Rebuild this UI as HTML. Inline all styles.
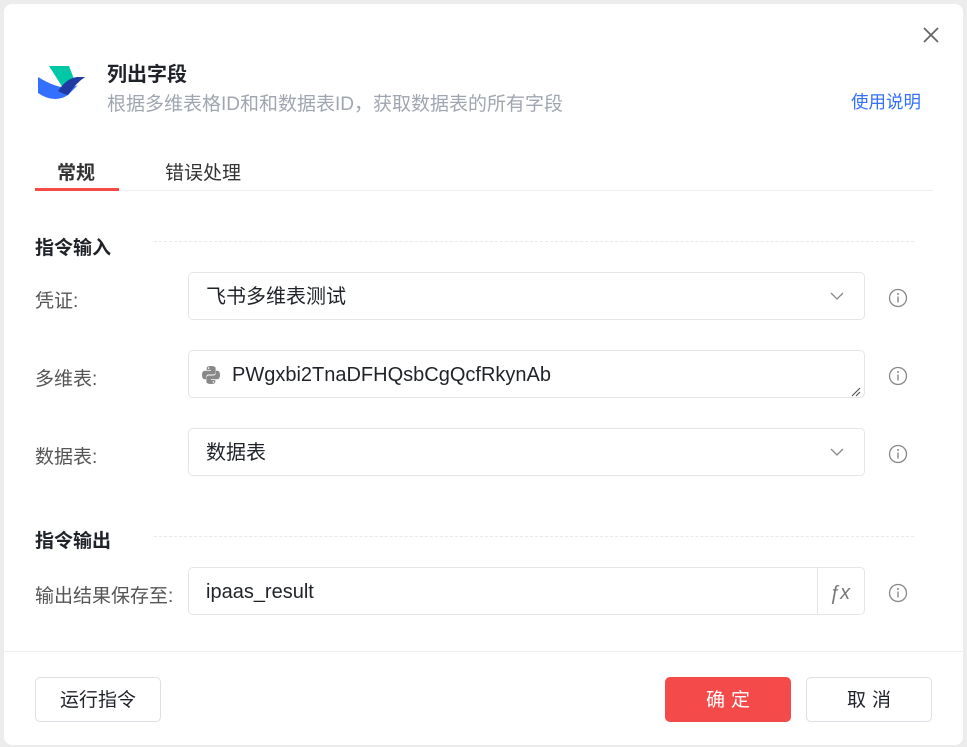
<!DOCTYPE html>
<html><head><meta charset="utf-8"><style>
*{box-sizing:border-box;margin:0;padding:0}
body{width:967px;height:747px;background:#ececec;font-family:"Liberation Sans","Noto Sans CJK SC",sans-serif;position:relative;overflow:hidden}
.modal{position:absolute;left:4px;top:4px;width:959px;height:741px;background:#fff;border-radius:8px}
.abs{position:absolute}
.title{left:103px;top:54px;font-size:20px;font-weight:bold;color:#1f2329}
.sub{left:103px;top:85px;font-size:19px;color:#a0a6b1}
.help{left:847px;top:85px;font-size:17.5px;color:#3370ff}
.tab{top:154px;font-size:19px;color:#333}
.tabline{left:31px;top:184px;width:84px;height:3px;background:#f54a45}
.tabborder{left:31px;top:186px;width:898px;height:1px;background:#eee}
.sec{left:31px;font-size:19px;font-weight:bold;color:#1f2329}
.dash{height:0;border-top:1px dashed #e6e8eb}
.lab{left:31px;font-size:19px;color:#555}
.inp{left:184px;width:677px;height:48px;border:1px solid #e3e5e8;border-radius:5px;font-size:20px;color:#1f2329;padding-left:17px;line-height:49px}
.info{left:884px;width:20px;height:20px}
.btn{border:1px solid #dcdfe3;border-radius:5px;height:45px;font-size:19px;text-align:center;line-height:45px;color:#1f2329;background:#fff}
</style></head><body>
<div class="modal">
<svg class="abs" style="left:918px;top:22px" width="18" height="18" viewBox="0 0 18 18"><path d="M2 2L16 16M16 2L2 16" stroke="#666" stroke-width="1.8"/></svg>
<svg class="abs" style="left:34px;top:58px" width="48" height="42" viewBox="0 0 48 42">
<path d="M11 4 L31 4 L36 17 L25 26 Z" fill="#00c8a6"/>
<path d="M0 15 L0 31 Q16 42 30 33 L40 23 Q26 31 0 15Z" fill="#3370ff"/>
<path d="M20 29 Q29 16 39 15 L47 15 Q38 21 30 33 Q25 32 20 29Z" fill="#1f3aa3"/>
</svg>
<div class="abs title">列出字段</div>
<div class="abs sub">根据多维表格ID和和数据表ID，获取数据表的所有字段</div>
<div class="abs help">使用说明</div>
<div class="abs tab" style="left:53px;font-weight:bold">常规</div>
<div class="abs tab" style="left:161px">错误处理</div>
<div class="abs tabborder"></div>
<div class="abs tabline"></div>

<div class="abs sec" style="top:229px">指令输入</div>
<div class="abs dash" style="left:150px;top:237px;width:760px"></div>

<div class="abs lab" style="top:282px">凭证:</div>
<div class="abs inp" style="top:268px">飞书多维表测试</div>
<svg class="abs" style="left:826px;top:288px" width="14" height="9" viewBox="0 0 14 9"><path d="M1 1L7 7L13 1" stroke="#888" fill="none" stroke-width="1.3"/></svg>

<div class="abs lab" style="top:360px">多维表:</div>
<div class="abs inp" style="top:346px;padding-left:43px">PWgxbi2TnaDFHQsbCgQcfRkynAb</div>
<svg class="abs" style="left:197px;top:361px" width="20" height="20" viewBox="0 0 20 20"><path d="M9.8 1C5.5 1 5.700 2.9 5.7 2.9V5h4.3v.8H4C4 5.8 1 5.5 1 10s2.6 4.3 2.6 4.3h1.6v-2.2s-.1-2.6 2.6-2.6h4.3s2.5 0 2.5-2.4V3.2S15 1 9.8 1zM7.6 2.3a.8.8 0 110 1.6.8.8 0 010-1.6z" fill="#888"/><path d="M10.2 19c4.3 0 4.1-1.9 4.1-1.9V15H10v-.8h6s3 .3 3-4.2-2.6-4.3-2.6-4.3h-1.6v2.2s.1 2.6-2.6 2.6H7.9s-2.5 0-2.5 2.4v3.9S5 19 10.2 19zm2.2-1.3a.8.8 0 110-1.6.8.8 0 010 1.6z" fill="#888"/></svg>
<svg class="abs" style="left:845px;top:381px" width="12" height="12" viewBox="0 0 12 12"><path d="M11 3L3 11M11 7L7 11" stroke="#555" stroke-width="1.2"/></svg>

<div class="abs lab" style="top:438px">数据表:</div>
<div class="abs inp" style="top:424px">数据表</div>
<svg class="abs" style="left:826px;top:444px" width="14" height="9" viewBox="0 0 14 9"><path d="M1 1L7 7L13 1" stroke="#888" fill="none" stroke-width="1.3"/></svg>

<div class="abs sec" style="top:522px">指令输出</div>
<div class="abs dash" style="left:150px;top:532px;width:760px"></div>

<div class="abs lab" style="top:577px">输出结果保存至:</div>
<div class="abs inp" style="top:563px">ipaas_result</div>
<div class="abs" style="left:813px;top:564px;width:1px;height:46px;background:#e3e5e8"></div>
<div class="abs" style="left:825px;top:578px;font-size:20px;font-style:italic;color:#777">ƒx</div>

<svg class="abs info" style="top:284px" viewBox="0 0 20 20"><circle cx="10" cy="10" r="8.5" stroke="#888" fill="none" stroke-width="1.3"/><circle cx="10" cy="6" r="1" fill="#888"/><path d="M10 8.5v6" stroke="#888" stroke-width="1.4"/></svg>
<svg class="abs info" style="top:362px" viewBox="0 0 20 20"><circle cx="10" cy="10" r="8.5" stroke="#888" fill="none" stroke-width="1.3"/><circle cx="10" cy="6" r="1" fill="#888"/><path d="M10 8.5v6" stroke="#888" stroke-width="1.4"/></svg>
<svg class="abs info" style="top:440px" viewBox="0 0 20 20"><circle cx="10" cy="10" r="8.5" stroke="#888" fill="none" stroke-width="1.3"/><circle cx="10" cy="6" r="1" fill="#888"/><path d="M10 8.5v6" stroke="#888" stroke-width="1.4"/></svg>
<svg class="abs info" style="top:579px" viewBox="0 0 20 20"><circle cx="10" cy="10" r="8.5" stroke="#888" fill="none" stroke-width="1.3"/><circle cx="10" cy="6" r="1" fill="#888"/><path d="M10 8.5v6" stroke="#888" stroke-width="1.4"/></svg>

<div class="abs" style="left:0;top:647px;width:959px;height:1px;background:#eee"></div>
<div class="abs btn" style="left:31px;top:673px;width:126px">运行指令</div>
<div class="abs btn" style="left:661px;top:673px;width:126px;background:#f54a4a;border-color:#f54a4a;color:#fff;letter-spacing:6px;text-indent:6px">确定</div>
<div class="abs btn" style="left:802px;top:673px;width:126px;letter-spacing:6px;text-indent:6px">取消</div>
</div>
</body></html>
